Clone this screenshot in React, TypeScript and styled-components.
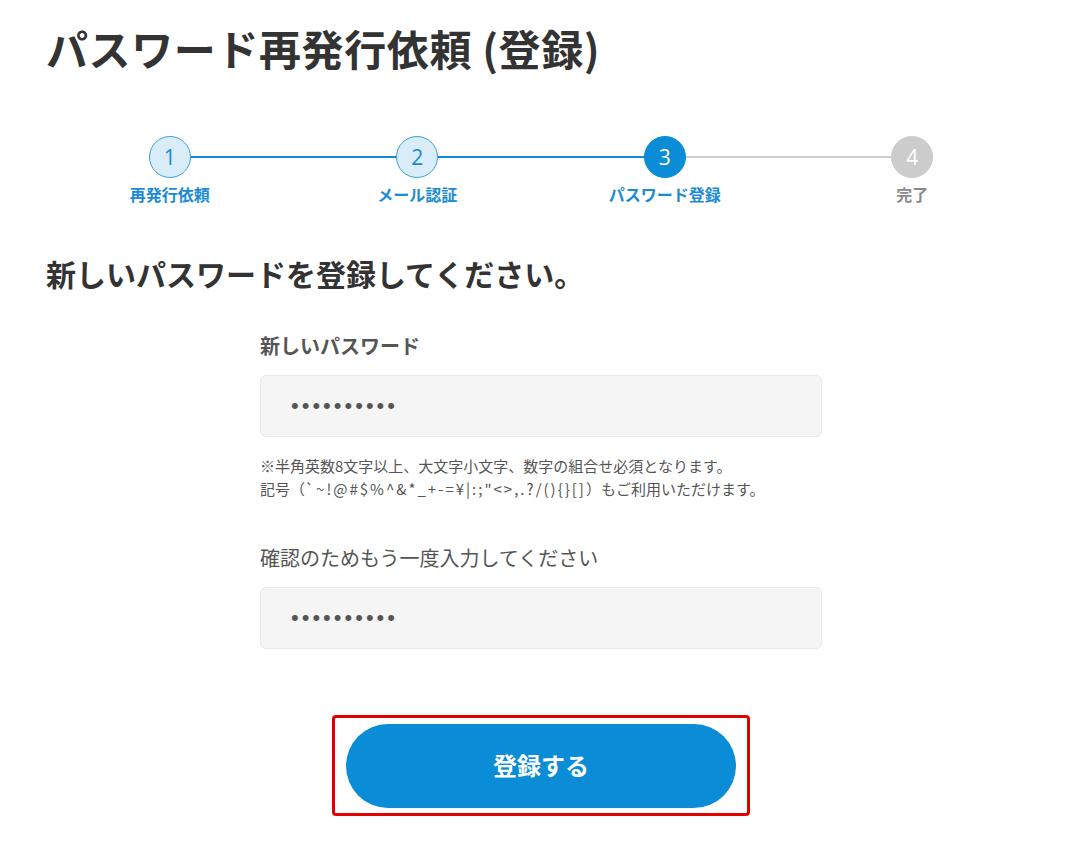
import React from "react";
import styled, { createGlobalStyle } from "styled-components";

const steps = [
  { no: 1, label: "再発行依頼" },
  { no: 2, label: "メール認証" },
  { no: 3, label: "パスワード登録" },
  { no: 4, label: "完了" }
];

const CURRENT = 3;

type StepState = "done" | "current" | "todo";

const stateOf = (no: number): StepState =>
  no < CURRENT ? "done" : no === CURRENT ? "current" : "todo";

export default function App() {
  return (
    <>
      <GlobalStyle />
      <Page>
        <Title>パスワード再発行依頼 (登録)</Title>

        <Steps>
          {steps.map((step) => (
            <Step key={step.no} state={stateOf(step.no)} first={step.no === 1}>
              <Circle state={stateOf(step.no)}>{step.no}</Circle>
              <StepLabel state={stateOf(step.no)}>{step.label}</StepLabel>
            </Step>
          ))}
        </Steps>

        <Lead>新しいパスワードを登録してください。</Lead>

        <Form>
          <FieldLabel bold>新しいパスワード</FieldLabel>
          <PasswordInput type="password" defaultValue="abcdefghij" readOnly />
          <Note>
            ※半角英数8文字以上、大文字小文字、数字の組合せ必須となります。
            <br />
            記号（<Symbols>`~!@#$%^&amp;*_+-=¥|:;"&lt;&gt;,.?/(){"{}"}[]</Symbols>）もご利用いただけます。
          </Note>

          <FieldLabel>確認のためもう一度入力してください</FieldLabel>
          <PasswordInput type="password" defaultValue="abcdefghij" readOnly />
        </Form>

        <ButtonFrame>
          <SubmitButton type="button">登録する</SubmitButton>
        </ButtonFrame>
      </Page>
    </>
  );
}

const GlobalStyle = createGlobalStyle`
  body {
    margin: 0;
    background: #fff;
    font-family: "Noto Sans CJK JP", "Noto Sans", sans-serif;
    color: #333;
  }
`;

const Page = styled.div`
  width: 990px;
  padding: 24px 0 40px 46px;
  display: flex;
  flex-direction: column;
`;

const Title = styled.h1`
  margin: 0;
  font-size: 42px;
  line-height: 48px;
  font-weight: 700;
  letter-spacing: 0.6px;
  color: #333;
`;

const Steps = styled.ol`
  list-style: none;
  margin: 64px 0 0;
  padding: 0;
  display: flex;
`;

const Step = styled.li<{ state: StepState; first: boolean }>`
  flex: 1;
  position: relative;
  display: flex;
  flex-direction: column;
  align-items: center;
  gap: 5px;

  &::before {
    content: "";
    display: ${(p) => (p.first ? "none" : "block")};
    position: absolute;
    top: 20px;
    left: -50%;
    right: 50%;
    height: 2px;
    background: ${(p) => (p.state === "todo" ? "#cccccc" : "#0a8dd6")};
  }
`;

const Circle = styled.span<{ state: StepState }>`
  position: relative;
  z-index: 1;
  box-sizing: border-box;
  width: 42px;
  height: 42px;
  border-radius: 50%;
  display: flex;
  align-items: center;
  justify-content: center;
  font-family: "Open Sans", "Liberation Sans", sans-serif;
  font-size: 21px;
  font-weight: 400;
  background: ${(p) =>
    p.state === "done" ? "#d9edf9" : p.state === "current" ? "#0a8dd6" : "#cccccc"};
  border: 1px solid
    ${(p) =>
      p.state === "done" ? "#3f9edb" : p.state === "current" ? "#0a8dd6" : "#cccccc"};
  color: ${(p) => (p.state === "done" ? "#1a8ad4" : "#fff")};
`;

const StepLabel = styled.span<{ state: StepState }>`
  font-size: 16px;
  line-height: 22px;
  font-weight: 700;
  color: ${(p) => (p.state === "todo" ? "#8a8a8a" : "#1a8bd5")};
`;

const Lead = styled.h2`
  margin: 48px 0 0;
  font-size: 30px;
  line-height: 40px;
  font-weight: 700;
  color: #333;
`;

const Form = styled.div`
  width: 562px;
  margin: 39px auto 0;
  display: flex;
  flex-direction: column;
`;

const FieldLabel = styled.label<{ bold?: boolean }>`
  font-size: 20px;
  line-height: 28px;
  font-weight: ${(p) => (p.bold ? 700 : 400)};
  color: #555;
  margin-bottom: 15px;

  & ~ & {
    margin-top: 44px;
  }
`;

const PasswordInput = styled.input`
  box-sizing: border-box;
  width: 100%;
  height: 62px;
  padding: 0 30px;
  border: 1px solid #e9e9e9;
  border-radius: 6px;
  background: #f5f5f5;
  font-family: "Liberation Sans", sans-serif;
  font-size: 22px;
  letter-spacing: 3px;
  color: #555;
  outline: none;
`;

const Note = styled.p`
  margin: 17px 0 0;
  font-size: 15px;
  line-height: 23px;
  color: #555;
`;

const Symbols = styled.span`
  letter-spacing: 2px;
`;

const ButtonFrame = styled.div`
  align-self: center;
  margin: 66px 0 0 0;
  padding: 6px 11px 5px;
  border: 3px solid #e00000;
  border-radius: 4px;
  display: flex;
`;

const SubmitButton = styled.button`
  width: 390px;
  height: 84px;
  padding: 0 0 4px;
  border: none;
  border-radius: 42px;
  background: #0a8dd6;
  color: #fff;
  font-family: "Noto Sans CJK JP", sans-serif;
  font-size: 24px;
  font-weight: 700;
  cursor: pointer;
`;
